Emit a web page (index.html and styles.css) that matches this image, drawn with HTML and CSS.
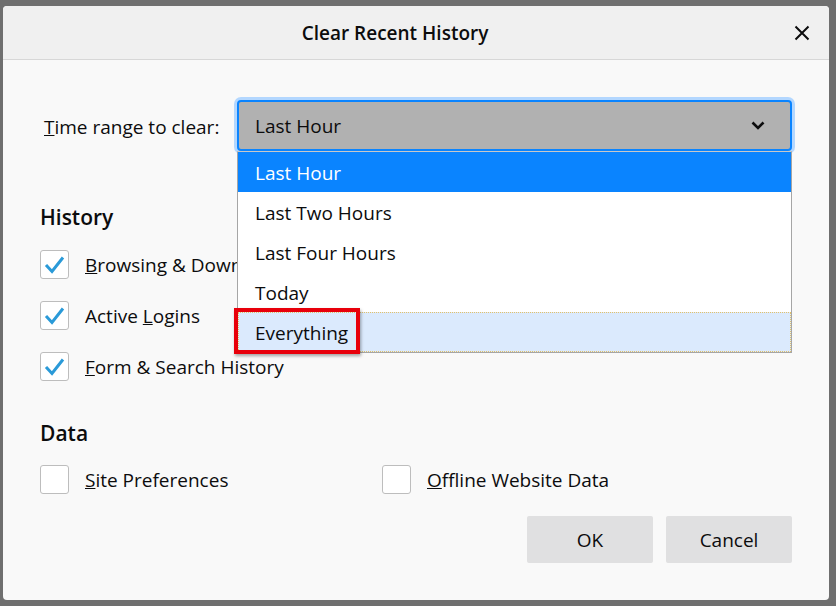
FILE: index.html
```html
<!DOCTYPE html>
<html>
<head>
<meta charset="utf-8">
<link rel="stylesheet" href="styles.css">
</head>
<body>
<div class="dialog">
  <div class="titlebar">
    <div class="title">Clear Recent History</div>
    <button class="close" aria-label="Close">
      <svg width="16" height="16" viewBox="0 0 16 16"><path d="M1.5 1.5 L14.5 14.5 M14.5 1.5 L1.5 14.5" stroke="#0c0c0d" stroke-width="2" fill="none"/></svg>
    </button>
  </div>
  <div class="content">
    <div class="range-row">
      <label class="range-label"><u>T</u>ime range to clear:</label>
      <div class="select-wrap">
        <div class="select">
          <span>Last Hour</span>
          <svg class="chevron" width="14" height="9" viewBox="0 0 14 9"><path d="M1.5 1.5 L7 7 L12.5 1.5" stroke="#0c0c0d" stroke-width="2.6" fill="none"/></svg>
        </div>
        <ul class="menu">
          <li class="item selected">Last Hour</li>
          <li class="item">Last Two Hours</li>
          <li class="item">Last Four Hours</li>
          <li class="item">Today</li>
          <li class="item hovered">Everything<span class="mark"></span></li>
        </ul>
      </div>
    </div>

    <h2 class="section history">History</h2>
    <div class="checks">
      <div class="check-row">
        <span class="box checked"><svg width="29" height="29" viewBox="0 0 29 29"><path d="M6 15 L12 21.5 L23 7.5" stroke="#2a9ad8" stroke-width="3" fill="none"/></svg></span>
        <span class="label clipped"><u>B</u>rowsing &amp; Download History</span>
      </div>
      <div class="check-row">
        <span class="box checked"><svg width="29" height="29" viewBox="0 0 29 29"><path d="M6 15 L12 21.5 L23 7.5" stroke="#2a9ad8" stroke-width="3" fill="none"/></svg></span>
        <span class="label">Active <u>L</u>ogins</span>
      </div>
      <div class="check-row">
        <span class="box checked"><svg width="29" height="29" viewBox="0 0 29 29"><path d="M6 15 L12 21.5 L23 7.5" stroke="#2a9ad8" stroke-width="3" fill="none"/></svg></span>
        <span class="label"><u>F</u>orm &amp; Search History</span>
      </div>
    </div>

    <h2 class="section data">Data</h2>
    <div class="data-row">
      <div class="check-row">
        <span class="box"></span>
        <span class="label"><u>S</u>ite Preferences</span>
      </div>
      <div class="check-row">
        <span class="box"></span>
        <span class="label"><u>O</u>ffline Website Data</span>
      </div>
    </div>

    <div class="buttons">
      <button class="btn">OK</button>
      <button class="btn">Cancel</button>
    </div>
  </div>
</div>
</body>
</html>
```

FILE: styles.css
```css
* { box-sizing: border-box; }
html, body { margin: 0; padding: 0; }
body {
  background: #6f6f6f;
  width: 836px;
  height: 606px;
  overflow: hidden;
  padding: 6px 0 0 3px;
  font-family: "Open Sans", "Noto Sans", sans-serif;
  color: #0c0c0d;
}
.dialog {
  width: 826px;
  height: 594px;
  background: #f9f9f9;
  border-radius: 4px;
  display: flex;
  flex-direction: column;
}
.titlebar {
  height: 54px;
  flex: none;
  background: #f0f0f0;
  border-bottom: 1px solid #d7d7d7;
  border-radius: 4px 4px 0 0;
  display: flex;
  align-items: center;
}
.title {
  flex: 1;
  text-align: center;
  font-size: 19px;
  font-weight: 600;
  padding-top: 1px;
}
.close {
  width: 30px;
  height: 30px;
  margin-right: 12px;
  border: 0;
  background: transparent;
  padding: 0;
  display: flex;
  align-items: center;
  justify-content: center;
}
.content {
  padding: 40px 37px 0 37px;
  flex: 1;
  display: flex;
  flex-direction: column;
  font-size: 19px;
}
.range-row {
  display: grid;
  grid-template-columns: 197px 1fr;
  align-items: center;
}
.range-label {
  margin-left: 4px;
  padding-top: 3px;
  white-space: nowrap;
}
.select-wrap { position: relative; }
.select {
  height: 51px;
  background: #b1b1b1;
  border: 2px solid #0a84ff;
  border-radius: 4px;
  box-shadow: 0 0 0 3px #b3d7ff;
  display: flex;
  align-items: center;
  justify-content: space-between;
  padding: 1px 25px 0 16px;
}
.chevron { margin-top: -2px; }
.menu {
  position: absolute;
  left: 0;
  right: 0;
  top: 51px;
  margin: 0;
  padding: 0;
  list-style: none;
  background: #fff;
  border: 1px solid #a6a6a6;
  border-top-color: #c8c8c8;
  z-index: 5;
}
.item {
  height: 40px;
  display: flex;
  align-items: center;
  padding: 1px 0 0 17px;
  position: relative;
}
.item.selected { background: #0a84ff; color: #fff; }
.item.hovered {
  background: #dbeafd;
  outline: 1px dotted #e2c16a;
  outline-offset: -1px;
}
.mark {
  position: absolute;
  left: -4px;
  top: -4px;
  width: 126px;
  height: 46px;
  border: 4px solid #e8000b;
  box-shadow: 1px 2px 3px rgba(0, 0, 0, 0.35);
}
.section {
  margin: 0;
  font-size: 21px;
  font-weight: 600;
  line-height: 28px;
}
.history { margin-top: 52px; }
.data { margin-top: 38px; }
.checks {
  margin-top: 19px;
  display: flex;
  flex-direction: column;
  gap: 22px;
}
.check-row {
  display: flex;
  align-items: center;
  height: 29px;
}
.box {
  width: 29px;
  height: 29px;
  flex: none;
  background: #fff;
  border: 1px solid #bdbdbd;
  border-radius: 3px;
  position: relative;
}
.box svg { position: absolute; left: -1px; top: -1px; }
.label { margin-left: 16px; padding-top: 1px; white-space: nowrap; }
.label.clipped { width: 152px; overflow: hidden; }
.data-row {
  margin-top: 18px;
  display: grid;
  grid-template-columns: 342px 1fr;
}
.buttons {
  margin-top: 22px;
  display: flex;
  justify-content: flex-end;
  gap: 13px;
}
.btn {
  width: 126px;
  height: 47px;
  border: 0;
  border-radius: 2px;
  background: #e0e0e1;
  font-family: inherit;
  font-size: 19px;
  color: #0c0c0d;
  padding-top: 2px;
}
```
